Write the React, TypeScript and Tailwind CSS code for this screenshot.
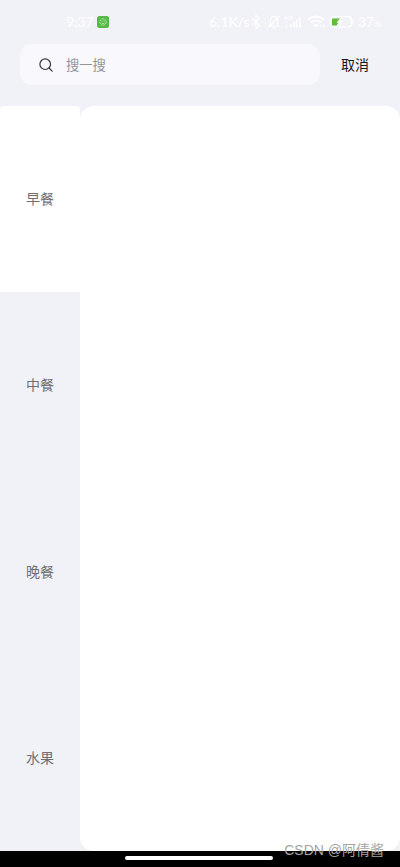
import { useState } from 'react';

const meals = ['早餐', '中餐', '晚餐', '水果'];

function StatusBar() {
  return (
    <div className="flex items-center h-11 pl-[66px] pr-[19px] font-['Lato','Noto_Sans_CJK_SC',sans-serif] text-white">
      <span className="w-[31px] shrink-0 text-[14px] leading-5 whitespace-nowrap tracking-[-0.2px]">9:37</span>
      <svg className="w-3 h-3 shrink-0" viewBox="0 0 12 12" fill="none">
        <rect width="12" height="12" rx="2.5" fill="#55b947" />
        <circle cx="6" cy="6" r="3.2" stroke="#d5f3cf" strokeWidth="0.8" strokeDasharray="2 0.7" />
        <path d="M4.5 5h.8M6.7 5h.8M4.7 7c.8.8 1.8.8 2.6 0" stroke="#d5f3cf" strokeWidth="0.8" />
      </svg>
      <span className="ml-[100px] w-[41px] shrink-0 text-[14px] leading-5 whitespace-nowrap">6.1K/s</span>
      <svg className="w-3 h-4 shrink-0" viewBox="0 0 12 16" fill="none" stroke="currentColor" strokeWidth="1.1">
        <path d="M2.5 4.5l7 7L6 14.5v-13l3.5 3-7 7M1 8h1M10 8h1" />
      </svg>
      <svg className="ml-[5px] w-[14px] h-4 shrink-0" viewBox="0 0 14 16" fill="none" stroke="currentColor" strokeWidth="1.1">
        <path d="M2 12h10l-1.3-2V6.5C10.7 4 9 2.5 7 2.5S3.3 4 3.3 6.5V10L2 12zM5.5 14h3M12.5 2L1.5 13.5" />
      </svg>
      <svg className="ml-[3px] w-[18px] h-4 shrink-0" viewBox="0 0 18 16" fill="none" stroke="currentColor">
        <path d="M1 2v4M4 2v4M1 4h3M6 2v4h1.5l1-1V3l-1-1H6" strokeWidth="0.8" />
        <path d="M2.5 11.5v2M6.5 10v3.5M10 7.5v6M13 5.5v8M16 3v10.5" strokeWidth="1.5" />
      </svg>
      <svg className="ml-[5px] w-[18px] h-[14px] shrink-0" viewBox="0 0 18 14" fill="none" stroke="currentColor" strokeWidth="1.8">
        <path d="M1.5 4.5c4.5-4 10.5-4 15 0M4 7.5c3-2.6 7-2.6 10 0" />
        <path d="M6.5 10c1.5-1.3 3.5-1.3 5 0L9 12.5z" fill="currentColor" stroke="none" />
        <path d="M14 9.5v3M16.5 9.5v3" strokeWidth="0.9" />
      </svg>
      <svg className="ml-[5px] w-6 h-3 shrink-0" viewBox="0 0 24 12" fill="none">
        <rect x="0.7" y="0.7" width="20.5" height="10.3" rx="3" stroke="white" strokeWidth="1.2" />
        <path d="M23 4v4" stroke="white" />
        <path d="M2 2.5h8L6.5 6.5h2L6.5 9.5H2z" fill="#64bd37" />
        <path d="M11.5 1L7 6.8h3L8.5 11 13.5 5h-3z" fill="white" />
      </svg>
      <span className="ml-1 pt-px text-[14px] leading-5 whitespace-nowrap tracking-[-0.2px]">
        37<span className="text-[9px]">%</span>
      </span>
    </div>
  );
}

function SearchBar() {
  return (
    <div className="flex items-center pl-5">
      <div className="flex items-center w-[300px] h-[41px] pl-[19px] rounded-xl bg-[#f8f8fd]">
        <svg className="w-[14px] h-[14px]" viewBox="0 0 14 14" fill="none" stroke="#39393d" strokeWidth="1.2">
          <circle cx="6.2" cy="6.2" r="5.3" />
          <path d="M10 10l3.2 3.2" strokeLinecap="round" />
        </svg>
        <span className="ml-[13px] text-[13.3px] leading-5 text-[#929297]">搜一搜</span>
      </div>
      <button className="ml-[21px] pb-0.5 text-sm leading-5 text-[#18181a]">取消</button>
    </div>
  );
}

function App() {
  const [active, setActive] = useState(0);

  return (
    <div className="relative flex flex-col w-full h-[867px] overflow-hidden bg-[#f1f2f7] font-['Noto_Sans_CJK_SC',sans-serif]">
      <StatusBar />
      <SearchBar />
      <main className="flex flex-1 mt-[21px]">
        <nav className="flex flex-col w-20">
          {meals.map((meal, index) => (
            <button
              key={meal}
              onClick={() => setActive(index)}
              className={`flex-1 pb-0.5 text-sm leading-5 text-[#707074] ${active === index ? 'bg-white rounded-t-[4px]' : ''}`}
            >
              {meal}
            </button>
          ))}
        </nav>
        <section className="flex-1 bg-white rounded-[14px]" />
      </main>
      <footer className="flex justify-center h-4 pt-[5px] bg-black">
        <div className="w-[148px] h-1 -ml-[3px] rounded-full bg-white" />
      </footer>
      <p className="absolute right-4 bottom-[7px] font-['Liberation_Sans','Noto_Sans_CJK_SC',sans-serif] text-[14px] leading-5 text-[#a5a5a5] whitespace-nowrap">
        CSDN @阿倩酱
      </p>
    </div>
  );
}

export default App;
